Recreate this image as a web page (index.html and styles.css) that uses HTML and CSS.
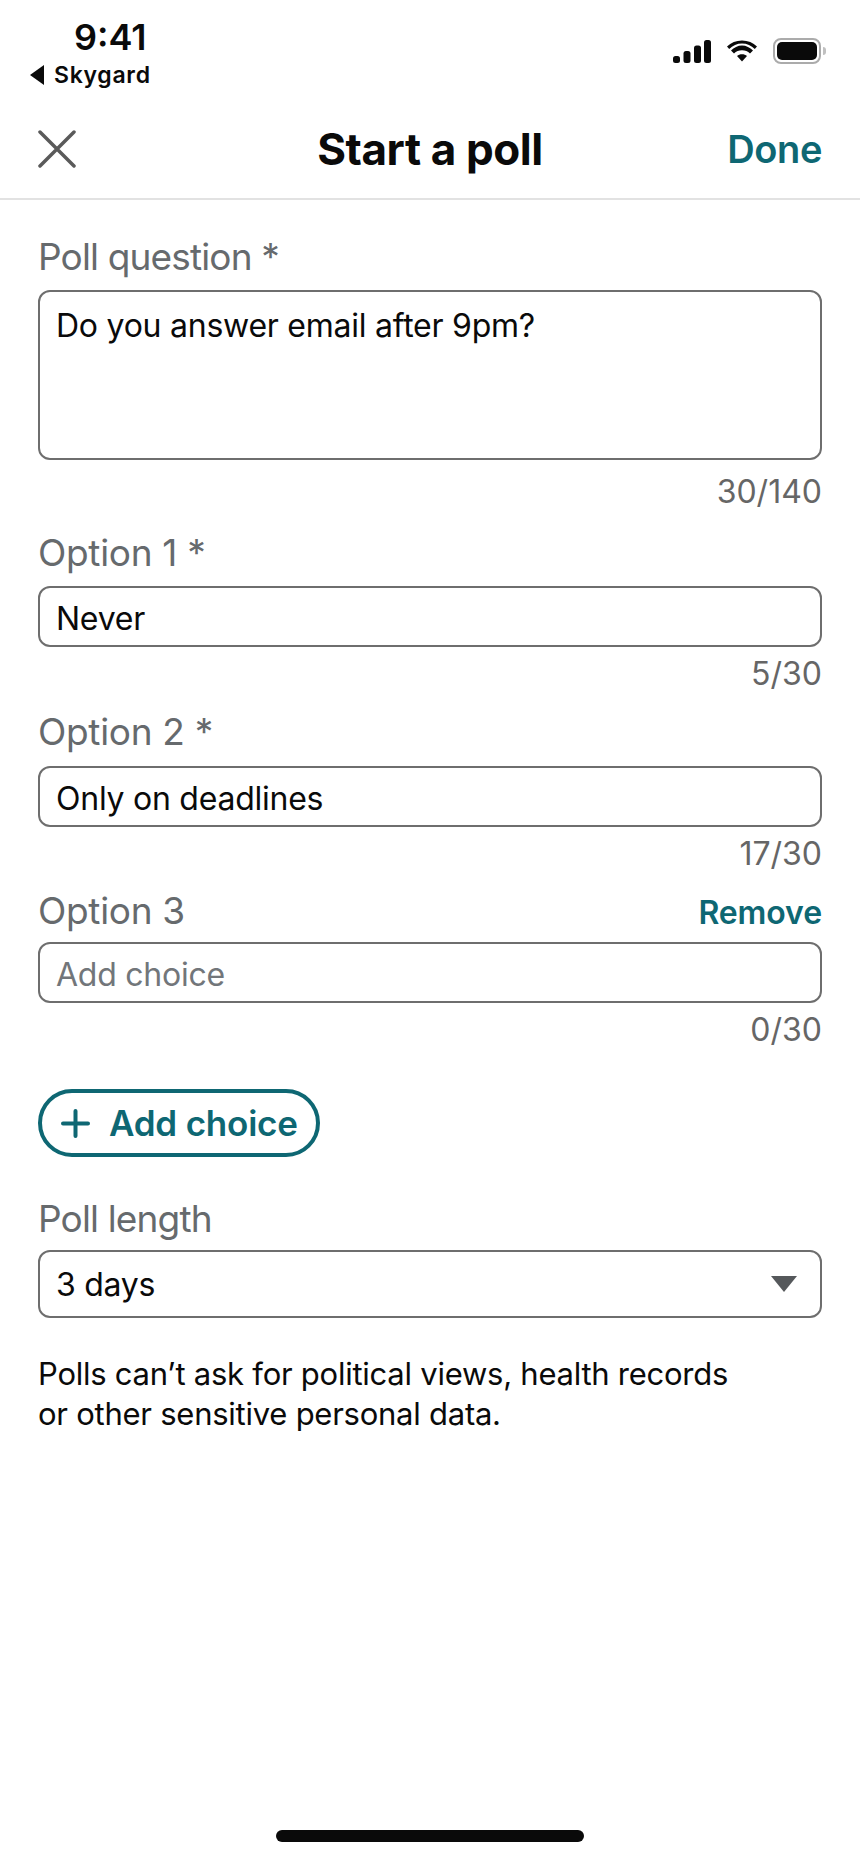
FILE: index.html
```html
<!DOCTYPE html>
<html lang="en">
<head>
  <meta charset="UTF-8">
  <title>Start a poll</title>
  <link rel="stylesheet" href="styles.css">
</head>
<body>
  <div class="phone">
    <div class="status">
      <div class="status-left">
        <div class="time">9:41</div>
        <div class="back"><span class="back-arrow"></span>Skygard</div>
      </div>
      <div class="status-right">
        <svg class="signal" width="38" height="23" viewBox="0 0 38 23" fill="#0a0a0a">
          <rect x="0" y="16" width="7" height="7" rx="2.5"/>
          <rect x="10.500" y="11" width="7" height="12" rx="2.5"/>
          <rect x="21" y="5.500" width="7" height="17.500" rx="2.5"/>
          <rect x="31" y="0" width="7" height="23" rx="2.5"/>
        </svg>
        <svg class="wifi" width="30" height="22" viewBox="0 0 30 22" fill="#0a0a0a">
          <path d="M0 6.500C4 2.500 9 0.500 15 0.500C21 0.500 26 2.500 30 6.500L27.800 9C24.300 5.500 20 3.500 15 3.500C10 3.500 5.700 5.500 2.200 9Z"/>
          <path d="M4 10.500C7 7.500 10.800 5.500 15 5.500C19.200 5.500 23 7.500 26 10.500L23 13.500C20.800 11.500 18.200 10.300 15 10.300C11.800 10.300 9.200 11.500 7 13.500Z"/>
          <path d="M10 16C11.400 14.800 13 14.200 15 14.200C17 14.200 18.600 14.800 20 16L15 21.500Z"/>
        </svg>
        <div class="battery"><div class="battery-fill"></div></div>
        <div class="battery-cap"></div>
      </div>
    </div>

    <header class="topbar">
      <svg class="close" width="38" height="38" viewBox="0 0 38 38" fill="none" stroke="#5a5a5a" stroke-width="3.500" stroke-linecap="round">
        <path d="M2 2L36 36M36 2L2 36"/>
      </svg>
      <h1>Start a poll</h1>
      <div class="done">Done</div>
    </header>

    <main class="form">
      <div class="label label-poll first">Poll question *</div>
      <div class="box box-question">Do you answer email after 9pm?</div>
      <div class="count count-question">30/140</div>

      <div class="label label-first-option">Option 1 *</div>
      <div class="box">Never</div>
      <div class="count">5/30</div>

      <div class="label">Option 2 *</div>
      <div class="box">Only on deadlines</div>
      <div class="count">17/30</div>

      <div class="label-row">
        <div class="label">Option 3</div>
        <div class="remove">Remove</div>
      </div>
      <div class="box placeholder">Add choice</div>
      <div class="count">0/30</div>

      <div class="add-btn">
        <svg width="29" height="29" viewBox="0 0 29 29" fill="none" stroke="#0e6773" stroke-width="4" stroke-linecap="round">
          <path d="M14.500 2V27M2 14.500H27"/>
        </svg>
        Add choice
      </div>

      <div class="label label-poll length-label">Poll length</div>
      <div class="box box-select">
        3 days
        <span class="caret"></span>
      </div>

      <p class="note">Polls can’t ask for political views, health records<br>or other sensitive personal data.</p>
    </main>

    <div class="home-bar"></div>
  </div>
</body>
</html>
```

FILE: styles.css
```css
* {
  box-sizing: border-box;
}
body {
  margin: 0;
  font-family: Inter, "Liberation Sans", sans-serif;
  background: #fff;
  color: #0a0a0a;
}
.phone {
  position: relative;
  width: 860px;
  height: 1864px;
  overflow: hidden;
}
.status {
  display: flex;
  justify-content: space-between;
  height: 104px;
  padding: 18px 34px 0 28px;
}
.time {
  font-size: 36px;
  line-height: 38px;
  font-weight: 600;
  margin-left: 46px;
}
.back {
  display: flex;
  align-items: center;
  font-size: 23px;
  line-height: 28px;
  font-weight: 600;
  letter-spacing: 0.7px;
  margin-top: 5px;
}
.back-arrow {
  width: 0;
  height: 0;
  border-top: 10px solid transparent;
  border-bottom: 10px solid transparent;
  border-right: 14px solid #0a0a0a;
  margin: 0 10px 0 2px;
}
.status-right {
  display: flex;
  align-items: flex-start;
  padding-top: 22px;
}
.signal {
  margin-right: 16px;
}
.wifi {
  margin-right: 16px;
}
.battery {
  width: 48px;
  height: 26px;
  border: 2px solid #ababab;
  border-radius: 8px;
  padding: 2px;
  margin-top: -2px;
}
.battery-fill {
  height: 100%;
  background: #0a0a0a;
  border-radius: 5px;
}
.battery-cap {
  width: 3px;
  height: 8px;
  background: #c0c0c0;
  border-radius: 0 3px 3px 0;
  margin: 7px 0 0 2px;
}
.topbar {
  display: grid;
  grid-template-columns: 1fr auto 1fr;
  align-items: center;
  height: 96px;
  padding: 0 38px 4px;
  border-bottom: 2px solid #e2e2e2;
}
.topbar h1 {
  margin: 0;
  font-size: 44px;
  font-weight: 700;
  letter-spacing: -0.4px;
  line-height: 54px;
}
.done {
  justify-self: end;
  font-size: 38px;
  font-weight: 600;
  letter-spacing: -0.4px;
  color: #0e6773;
}
.form {
  padding: 0 38px;
}
.label {
  font-size: 37px;
  line-height: 44px;
  color: #666a6d;
  letter-spacing: -0.3px;
  margin-top: 16px;
  margin-bottom: 12px;
}
.label-poll {
  letter-spacing: -0.85px;
}
.label.first {
  margin-top: 35px;
  margin-bottom: 11px;
}
.label-first-option {
  margin-top: 19px;
  margin-bottom: 11px;
}
.label-row {
  display: flex;
  justify-content: space-between;
  align-items: center;
  margin-top: 15px;
  margin-bottom: 9px;
}
.label-row .label {
  margin: 0;
}
.remove {
  font-size: 32px;
  font-weight: 600;
  letter-spacing: -0.1px;
  color: #0e6773;
  padding-top: 2px;
}
.box {
  height: 61px;
  border: 2px solid #6e6e6e;
  border-radius: 12px;
  padding: 3px 16px 0;
  display: flex;
  align-items: center;
  font-size: 32px;
  letter-spacing: -0.25px;
}
.box-question {
  height: 170px;
  align-items: flex-start;
  padding-top: 14px;
  line-height: 40px;
}
.placeholder {
  color: #72767a;
}
.count {
  font-size: 32px;
  line-height: 40px;
  color: #666;
  text-align: right;
  margin-top: 7px;
}
.count-question {
  margin-top: 12px;
}
.add-btn {
  display: inline-flex;
  align-items: center;
  gap: 19px;
  height: 68px;
  margin-top: 39px;
  padding: 0 18px 0 19px;
  border: 4px solid #0e6773;
  border-radius: 34px;
  font-size: 35px;
  font-weight: 600;
  letter-spacing: -0.2px;
  color: #0e6773;
}
.length-label {
  margin-top: 40px;
  margin-bottom: 9px;
}
.box-select {
  height: 68px;
  justify-content: space-between;
  padding-top: 0;
}
.caret {
  width: 0;
  height: 0;
  border-left: 13px solid transparent;
  border-right: 13px solid transparent;
  border-top: 16px solid #55585b;
  margin-right: 7px;
}
.note {
  margin: 36px 0 0;
  font-size: 31px;
  line-height: 40px;
  letter-spacing: -0.25px;
}
.home-bar {
  position: absolute;
  left: 276px;
  bottom: 22px;
  width: 308px;
  height: 12px;
  background: #0a0a0a;
  border-radius: 6px;
}
```
